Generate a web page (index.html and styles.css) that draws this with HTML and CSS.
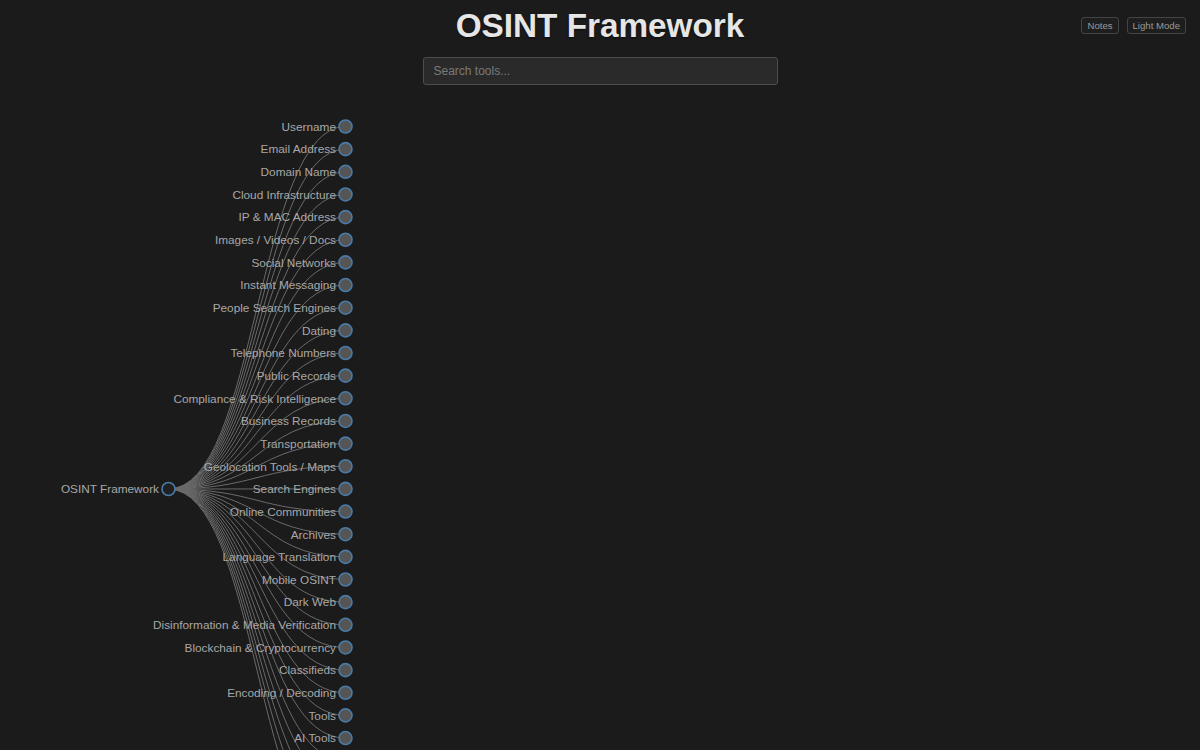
FILE: index.html
```html
<!DOCTYPE html>
<html lang="en">
<head>
<meta charset="utf-8">
<title>OSINT Framework</title>
<link rel="stylesheet" href="styles.css">
</head>
<body>
<header class="top">
  <div class="spacer"></div>
  <h1 class="title">OSINT Framework</h1>
  <div class="actions">
    <button class="btn">Notes</button>
    <button class="btn">Light Mode</button>
  </div>
</header>
<div class="search-row">
  <input class="search" type="text" placeholder="Search tools...">
</div>
<svg class="tree" width="1200" height="665" viewBox="0 85 1200 665" xmlns="http://www.w3.org/2000/svg">
  <g class="links">
    <path d="M168.5,489 C257,489 257,126.5 345.5,126.5"/>
    <path d="M168.5,489 C257,489 257,149.15 345.5,149.15"/>
    <path d="M168.5,489 C257,489 257,171.8 345.5,171.8"/>
    <path d="M168.5,489 C257,489 257,194.45 345.5,194.45"/>
    <path d="M168.5,489 C257,489 257,217.1 345.5,217.1"/>
    <path d="M168.5,489 C257,489 257,239.75 345.5,239.75"/>
    <path d="M168.5,489 C257,489 257,262.4 345.5,262.4"/>
    <path d="M168.5,489 C257,489 257,285.05 345.5,285.05"/>
    <path d="M168.5,489 C257,489 257,307.7 345.5,307.7"/>
    <path d="M168.5,489 C257,489 257,330.35 345.5,330.35"/>
    <path d="M168.5,489 C257,489 257,353 345.5,353"/>
    <path d="M168.5,489 C257,489 257,375.65 345.5,375.65"/>
    <path d="M168.5,489 C257,489 257,398.3 345.5,398.3"/>
    <path d="M168.5,489 C257,489 257,420.95 345.5,420.95"/>
    <path d="M168.5,489 C257,489 257,443.6 345.5,443.6"/>
    <path d="M168.5,489 C257,489 257,466.25 345.5,466.25"/>
    <path d="M168.5,489 C257,489 257,488.9 345.5,488.9"/>
    <path d="M168.5,489 C257,489 257,511.55 345.5,511.55"/>
    <path d="M168.5,489 C257,489 257,534.2 345.5,534.2"/>
    <path d="M168.5,489 C257,489 257,556.85 345.5,556.85"/>
    <path d="M168.5,489 C257,489 257,579.5 345.5,579.5"/>
    <path d="M168.5,489 C257,489 257,602.15 345.5,602.15"/>
    <path d="M168.5,489 C257,489 257,624.8 345.5,624.8"/>
    <path d="M168.5,489 C257,489 257,647.45 345.5,647.45"/>
    <path d="M168.5,489 C257,489 257,670.1 345.5,670.1"/>
    <path d="M168.5,489 C257,489 257,692.75 345.5,692.75"/>
    <path d="M168.5,489 C257,489 257,715.4 345.5,715.4"/>
    <path d="M168.5,489 C257,489 257,738.05 345.5,738.05"/>
    <path d="M168.5,489 C257,489 257,760.7 345.5,760.7"/>
    <path d="M168.5,489 C257,489 257,783.35 345.5,783.35"/>
    <path d="M168.5,489 C257,489 257,806 345.5,806"/>
    <path d="M168.5,489 C257,489 257,828.65 345.5,828.65"/>
    <path d="M168.5,489 C257,489 257,851.3 345.5,851.3"/>
  </g>
  <g class="node root">
    <circle cx="168.5" cy="489" r="6.5"/>
    <text x="159" y="493.3">OSINT Framework</text>
  </g>
  <g class="node">
    <circle cx="345.5" cy="126.5" r="6.5"/><text x="336" y="130.8">Username</text>
    <circle cx="345.5" cy="149.15" r="6.5"/><text x="336" y="153.45">Email Address</text>
    <circle cx="345.5" cy="171.8" r="6.5"/><text x="336" y="176.1">Domain Name</text>
    <circle cx="345.5" cy="194.45" r="6.5"/><text x="336" y="198.75">Cloud Infrastructure</text>
    <circle cx="345.5" cy="217.1" r="6.5"/><text x="336" y="221.4">IP &amp; MAC Address</text>
    <circle cx="345.5" cy="239.75" r="6.5"/><text x="336" y="244.05">Images / Videos / Docs</text>
    <circle cx="345.5" cy="262.4" r="6.5"/><text x="336" y="266.7">Social Networks</text>
    <circle cx="345.5" cy="285.05" r="6.5"/><text x="336" y="289.35">Instant Messaging</text>
    <circle cx="345.5" cy="307.7" r="6.5"/><text x="336" y="312">People Search Engines</text>
    <circle cx="345.5" cy="330.35" r="6.5"/><text x="336" y="334.65">Dating</text>
    <circle cx="345.5" cy="353" r="6.5"/><text x="336" y="357.3">Telephone Numbers</text>
    <circle cx="345.5" cy="375.65" r="6.5"/><text x="336" y="379.95">Public Records</text>
    <circle cx="345.5" cy="398.3" r="6.5"/><text x="336" y="402.6">Compliance &amp; Risk Intelligence</text>
    <circle cx="345.5" cy="420.95" r="6.5"/><text x="336" y="425.25">Business Records</text>
    <circle cx="345.5" cy="443.6" r="6.5"/><text x="336" y="447.9">Transportation</text>
    <circle cx="345.5" cy="466.25" r="6.5"/><text x="336" y="470.55">Geolocation Tools / Maps</text>
    <circle cx="345.5" cy="488.9" r="6.5"/><text x="336" y="493.2">Search Engines</text>
    <circle cx="345.5" cy="511.55" r="6.5"/><text x="336" y="515.85">Online Communities</text>
    <circle cx="345.5" cy="534.2" r="6.5"/><text x="336" y="538.5">Archives</text>
    <circle cx="345.5" cy="556.85" r="6.5"/><text x="336" y="561.15">Language Translation</text>
    <circle cx="345.5" cy="579.5" r="6.5"/><text x="336" y="583.8">Mobile OSINT</text>
    <circle cx="345.5" cy="602.15" r="6.5"/><text x="336" y="606.45">Dark Web</text>
    <circle cx="345.5" cy="624.8" r="6.5"/><text x="336" y="629.1">Disinformation &amp; Media Verification</text>
    <circle cx="345.5" cy="647.45" r="6.5"/><text x="336" y="651.75">Blockchain &amp; Cryptocurrency</text>
    <circle cx="345.5" cy="670.1" r="6.5"/><text x="336" y="674.4">Classifieds</text>
    <circle cx="345.5" cy="692.75" r="6.5"/><text x="336" y="697.05">Encoding / Decoding</text>
    <circle cx="345.5" cy="715.4" r="6.5"/><text x="336" y="719.7">Tools</text>
    <circle cx="345.5" cy="738.05" r="6.5"/><text x="336" y="742.35">AI Tools</text>
  </g>
</svg>
</body>
</html>
```
FILE: styles.css
```css
html, body {
  margin: 0;
  padding: 0;
  background: #1b1b1b;
  overflow: hidden;
  font-family: "Liberation Sans", Arial, sans-serif;
}

.top {
  display: grid;
  grid-template-columns: 1fr auto 1fr;
  align-items: start;
}

.title {
  margin: 0;
  padding-top: 7px;
  font-size: 33.3px;
  line-height: 37px;
  font-weight: bold;
  color: #e6e6e6;
  text-shadow: 0 1px 2px rgba(0, 0, 0, 0.6);
}

.actions {
  justify-self: end;
  display: flex;
  gap: 8px;
  padding-top: 17px;
  padding-right: 14px;
}

.btn {
  height: 17px;
  padding: 0 5px;
  font-family: "Liberation Sans", Arial, sans-serif;
  font-size: 9.6px;
  line-height: 15px;
  color: #9a9a9a;
  background: #1e1e1e;
  border: 1px solid #444;
  border-radius: 3px;
}

.search-row {
  display: flex;
  justify-content: center;
  margin-top: 13px;
}

.search {
  box-sizing: border-box;
  width: 355px;
  height: 28px;
  padding: 0 10px;
  font-family: "Liberation Sans", Arial, sans-serif;
  font-size: 12px;
  color: #ddd;
  background: #2a2a2a;
  border: 1px solid #4d4d4d;
  border-radius: 3px;
  outline: none;
}

.search::placeholder {
  color: #7a7a7a;
}

.tree {
  display: block;
}

.links path {
  fill: none;
  stroke: #6a6a6a;
  stroke-width: 1px;
}

.node circle {
  fill: #555;
  stroke: #4a7ba8;
  stroke-width: 1.6px;
}

.node.root circle {
  fill: #202020;
}

.node text {
  font-family: "Liberation Sans", Arial, sans-serif;
  font-size: 11.8px;
  fill: #a8a8a8;
  text-anchor: end;
}
```
